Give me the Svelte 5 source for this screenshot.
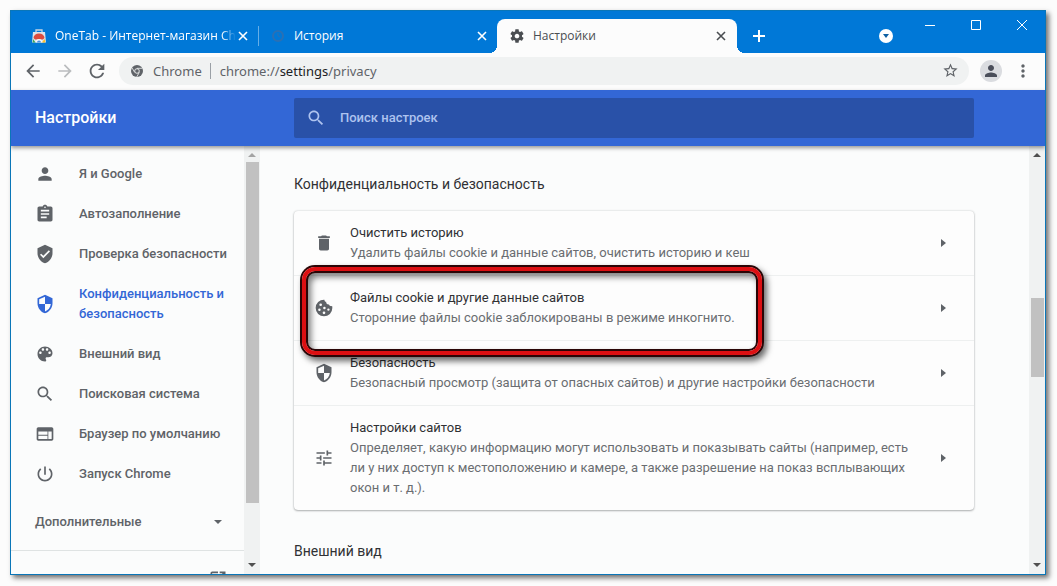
<script>
  let query = $state("");
  let address = $state("chrome://settings/privacy");
  let current = $state("privacy");

  const icons = {
    person:
      "M12 12c2.2 0 4-1.8 4-4s-1.8-4-4-4-4 1.8-4 4 1.8 4 4 4zm0 2c-2.7 0-8 1.3-8 4v2h16v-2c0-2.7-5.3-4-8-4z",
    clipboard:
      "M19 3h-4.2C14.4 1.8 13.3 1 12 1s-2.4.8-2.8 2H5c-1.1 0-2 .9-2 2v14c0 1.1.9 2 2 2h14c1.1 0 2-.9 2-2V5c0-1.1-.9-2-2-2zm-7 0c.55 0 1 .45 1 1s-.45 1-1 1-1-.45-1-1 .45-1 1-1zm2 14H7v-2h7v2zm3-4H7v-2h10v2zm0-4H7V7h10v2z",
    check:
      "M12 1L3 5v6c0 5.55 3.84 10.74 9 12 5.16-1.26 9-6.45 9-12V5l-9-4zm-2 16l-4-4 1.41-1.41L10 14.17l6.59-6.59L18 9l-8 8z",
    shield:
      "M12 1L3 5v6c0 5.55 3.84 10.74 9 12 5.16-1.26 9-6.45 9-12V5l-9-4zm0 10.99h7c-.53 4.12-3.28 7.79-7 8.94V12H5V6.3l7-3.11v8.8z",
    palette:
      "M12 3c-4.97 0-9 4.03-9 9s4.03 9 9 9c.83 0 1.5-.67 1.5-1.5 0-.39-.15-.74-.39-1.01-.23-.26-.38-.61-.38-.99 0-.83.67-1.5 1.5-1.5H16c2.76 0 5-2.24 5-5 0-4.42-4.03-8-9-8zm-5.5 9c-.83 0-1.5-.67-1.5-1.5S5.67 9 6.5 9 8 9.67 8 10.5 7.33 12 6.5 12zm3-4C8.67 8 8 7.33 8 6.5S8.67 5 9.5 5s1.5.67 1.5 1.5S10.33 8 9.5 8zm5 0c-.83 0-1.5-.67-1.5-1.5S13.67 5 14.5 5s1.5.67 1.5 1.5S15.33 8 14.5 8zm3 4c-.83 0-1.5-.67-1.5-1.5S16.67 9 17.5 9s1.5.67 1.5 1.5-.67 1.5-1.5 1.5z",
    search:
      "M15.5 14h-.79l-.28-.27C15.41 12.59 16 11.11 16 9.5 16 5.91 13.09 3 9.5 3S3 5.91 3 9.5 5.91 16 9.5 16c1.61 0 3.09-.59 4.23-1.57l.27.28v.79l5 4.99L20.49 19l-4.99-5zm-6 0C7.01 14 5 11.99 5 9.5S7.01 5 9.5 5 14 7.01 14 9.5 11.99 14 9.5 14z",
    browser:
      "M20 4H4c-1.1 0-2 .9-2 2v12c0 1.1.9 2 2 2h16c1.1 0 2-.9 2-2V6c0-1.1-.9-2-2-2zm-5 14H4v-4h11v4zm0-5H4V9h11v4zm5 5h-4V9h4v9z",
    power:
      "M13 3h-2v10h2V3zm4.83 2.17l-1.42 1.42C17.99 7.86 19 9.81 19 12c0 3.87-3.13 7-7 7s-7-3.13-7-7c0-2.19 1.01-4.14 2.58-5.42L6.17 5.17C4.23 6.82 3 9.26 3 12c0 4.97 4.03 9 9 9s9-4.03 9-9c0-2.74-1.23-5.18-3.17-6.83z",
    trash: "M6 19c0 1.1.9 2 2 2h8c1.1 0 2-.9 2-2V7H6v12zM19 4h-3.5l-1-1h-5l-1 1H5v2h14V4z",
    cookie:
      "M12 2a10 10 0 1 0 10 10c0-1-.1-1.6-.3-2.3-1.6.5-3.2-.3-3.7-1.9-2 .3-3.7-1.3-3.4-3.2-1.4-.3-2.1-1.3-2.1-2.6zM8 6.5a1.6 1.6 0 1 1 0 3.2 1.6 1.6 0 0 1 0-3.2zM6.5 12.5a1.5 1.5 0 1 1 0 3 1.5 1.5 0 0 1 0-3zM12.5 10.5a1.5 1.5 0 1 1 0 3 1.5 1.5 0 0 1 0-3zM17.3 12.5a1.4 1.4 0 1 1 0 2.8 1.4 1.4 0 0 1 0-2.8zM12 16.2a1.6 1.6 0 1 1 0 3.2 1.6 1.6 0 0 1 0-3.2z",
    tune: "M3 17v2h6v-2H3zM3 5v2h10V5H3zm10 16v-2h8v-2h-8v-2h-2v6h2zM7 9v2H3v2h4v2h2V9H7zm14 4v-2H11v2h10zm-6-4h2V7h4V5h-4V3h-2v6z",
    gear: "M19.43 12.98c.04-.32.07-.64.07-.98s-.03-.66-.07-.98l2.11-1.65c.19-.15.24-.42.12-.64l-2-3.46c-.12-.22-.39-.3-.61-.22l-2.49 1c-.52-.4-1.08-.73-1.69-.98l-.38-2.65C14.46 2.18 14.25 2 14 2h-4c-.25 0-.46.18-.49.42l-.38 2.65c-.61.25-1.17.59-1.69.98l-2.49-1c-.23-.09-.49 0-.61.22l-2 3.46c-.13.22-.07.49.12.64l2.11 1.65c-.04.32-.07.65-.07.98s.03.66.07.98l-2.11 1.65c-.19.15-.24.42-.12.64l2 3.46c.12.22.39.3.61.22l2.49-1c.52.4 1.08.73 1.69.98l.38 2.65c.03.24.24.42.49.42h4c.25 0 .46-.18.49-.42l.38-2.65c.61-.25 1.17-.59 1.69-.98l2.49 1c.23.09.49 0 .61-.22l2-3.46c.12-.22.07-.49-.12-.64l-2.11-1.65zM12 15.5c-1.93 0-3.5-1.57-3.5-3.5s1.57-3.5 3.5-3.5 3.5 1.57 3.5 3.5-1.57 3.5-3.5 3.5z",
    back: "M20 11H7.83l5.59-5.59L12 4l-8 8 8 8 1.41-1.41L7.83 13H20v-2z",
    forward: "M12 4l-1.41 1.41L16.17 11H4v2h12.17l-5.58 5.59L12 20l8-8z",
    reload:
      "M17.65 6.35C16.2 4.9 14.21 4 12 4c-4.42 0-7.99 3.58-7.99 8s3.57 8 7.99 8c3.73 0 6.84-2.55 7.73-6h-2.08c-.82 2.33-3.04 4-5.65 4-3.31 0-6-2.69-6-6s2.69-6 6-6c1.66 0 3.14.69 4.22 1.78L13 11h7V4l-2.35 2.35z",
    star: "M22 9.24l-7.19-.62L12 2 9.19 8.63 2 9.24l5.46 4.73L5.82 21 12 17.27 18.18 21l-1.63-7.03L22 9.24zM12 15.4l-3.76 2.27 1-4.28-3.32-2.88 4.38-.38L12 6.1l1.71 4.04 4.38.38-3.32 2.88 1 4.28L12 15.4z",
    dots: "M12 8c1.1 0 2-.9 2-2s-.9-2-2-2-2 .9-2 2 .9 2 2 2zm0 2c-1.1 0-2 .9-2 2s.9 2 2 2 2-.9 2-2-.9-2-2-2zm0 6c-1.1 0-2 .9-2 2s.9 2 2 2 2-.9 2-2-.9-2-2-2z",
    open: "M19 19H5V5h7V3H5c-1.1 0-2 .9-2 2v14c0 1.1.9 2 2 2h14c1.1 0 2-.9 2-2v-7h-2v7zM14 3v2h3.59l-9.83 9.83 1.41 1.41L19 6.41V10h2V3h-7z",
  };

  const menu = [
    { id: "people", icon: "person", label: "Я и Google" },
    { id: "autofill", icon: "clipboard", label: "Автозаполнение" },
    { id: "safetyCheck", icon: "check", label: "Проверка безопасности" },
    { id: "privacy", icon: "shield", label: "Конфиденциальность и безопасность" },
    { id: "appearance", icon: "palette", label: "Внешний вид" },
    { id: "search", icon: "search", label: "Поисковая система" },
    { id: "defaultBrowser", icon: "browser", label: "Браузер по умолчанию" },
    { id: "onStartup", icon: "power", label: "Запуск Chrome" },
  ];

  const rows = [
    {
      icon: "trash",
      title: "Очистить историю",
      text: "Удалить файлы cookie и данные сайтов, очистить историю и кеш",
    },
    {
      icon: "cookie",
      title: "Файлы cookie и другие данные сайтов",
      text: "Сторонние файлы cookie заблокированы в режиме инкогнито.",
      marked: true,
    },
    {
      icon: "shield",
      title: "Безопасность",
      text: "Безопасный просмотр (защита от опасных сайтов) и другие настройки безопасности",
    },
    {
      icon: "tune",
      title: "Настройки сайтов",
      text: "Определяет, какую информацию могут использовать и показывать сайты (например, есть ли у них доступ к местоположению и камере, а также разрешение на показ всплывающих окон и т. д.).",
    },
  ];
</script>

{#snippet icon(name, size)}
  <svg width={size} height={size} viewBox="0 0 24 24" fill="currentColor" fill-rule="evenodd" aria-hidden="true">
    <path d={icons[name]} />
  </svg>
{/snippet}

{#snippet cross()}
  <svg width="10" height="10" viewBox="0 0 10 10" stroke="currentColor" stroke-width="1.6" aria-hidden="true">
    <path d="M1 1l8 8M9 1l-8 8" />
  </svg>
{/snippet}

{#snippet scrollbar(kind)}
  <div class="scrollbar {kind}" aria-hidden="true">
    <svg class="arrow up" width="8" height="4" viewBox="0 0 8 4"><path d="M0 4l4-4 4 4z" /></svg>
    <div class="track"><div class="thumb"></div></div>
    <svg class="arrow" width="8" height="4" viewBox="0 0 8 4"><path d="M0 0l4 4 4-4z" /></svg>
  </div>
{/snippet}

<div class="desktop">
  <div class="window">
    <div class="tab-strip">
      <div class="tab">
        <svg width="16" height="16" viewBox="0 0 16 16" aria-hidden="true">
          <path d="M5 4V2h6v2" fill="none" stroke="#c3d4e4" stroke-width="1.3" />
          <path d="M2 4h12l1 10.5H1z" fill="#dfe4ea" />
          <path d="M2.5 10a5.5 4.5 0 0 1 11 0l-1.5 1.5H4z" fill="#dd4b3e" />
          <path d="M2 11l2.5 3.5H1.7z" fill="#3aa757" />
          <path d="M14 11l-4 3.5h4.3z" fill="#fbc02d" />
          <path d="M4.5 14.5a3.5 3.5 0 0 1 7 0z" fill="#f3f5f7" />
          <path d="M6 14.5a2 2 0 0 1 4 0z" fill="#4a90e2" />
        </svg>
        <span class="tab-title fade">OneTab - Интернет-магазин Chr</span>
        <button aria-label="Закрыть">{@render cross()}</button>
      </div>
      <div class="tab second">
        <svg width="16" height="16" viewBox="0 0 16 16" fill="none" stroke="#2a70b4" stroke-width="2" aria-hidden="true">
          <circle cx="8" cy="8" r="5" />
          <path d="M8 5v3l2 1" stroke-width="1" />
        </svg>
        <span class="tab-title">История</span>
        <button aria-label="Закрыть">{@render cross()}</button>
      </div>
      <div class="tab active">
        {@render icon("gear", 16)}
        <span class="tab-title">Настройки</span>
        <button aria-label="Закрыть">{@render cross()}</button>
      </div>
      <button class="new-tab" aria-label="Новая вкладка">
        <svg width="12" height="12" viewBox="0 0 12 12" stroke="currentColor" stroke-width="2" aria-hidden="true">
          <path d="M6 0v12M0 6h12" />
        </svg>
      </button>
      <button class="tab-search" aria-label="Поиск вкладок">
        <svg width="14" height="14" viewBox="0 0 14 14" aria-hidden="true">
          <circle cx="7" cy="7" r="7" fill="#fff" />
          <path d="M4 5h6L7 9z" fill="#0d5fa3" />
        </svg>
      </button>
      <div class="window-controls">
        <button aria-label="Свернуть">
          <svg width="10" height="10" viewBox="0 0 10 10" stroke="currentColor"><path d="M0 5.5h10" /></svg>
        </button>
        <button aria-label="Развернуть">
          <svg width="10" height="10" viewBox="0 0 10 10" stroke="currentColor" fill="none"><path d="M.5.5h9v9h-9z" /></svg>
        </button>
        <button aria-label="Закрыть окно">
          <svg width="10" height="10" viewBox="0 0 10 10" stroke="currentColor"><path d="M0 0l10 10M10 0L0 10" /></svg>
        </button>
      </div>
    </div>

    <div class="toolbar">
      <button aria-label="Назад">{@render icon("back", 20)}</button>
      <button class="dim" aria-label="Вперёд">{@render icon("forward", 20)}</button>
      <button aria-label="Обновить">{@render icon("reload", 22)}</button>
      <div class="omnibox">
        <svg width="12" height="12" viewBox="0 0 12 12" aria-hidden="true">
          <circle cx="6" cy="6" r="6" fill="#5f6368" />
          <circle cx="6" cy="6" r="2.3" fill="#5f6368" stroke="#f0f2f2" stroke-width=".9" />
          <path d="M6 3.3h5.4M3.7 7.4L1 2.8M8.3 7.4L5.7 12" stroke="#f0f2f2" stroke-width=".8" />
        </svg>
        <span class="scheme">Chrome</span>
        <span class="address" aria-label={address}>chrome://<b>settings</b>/privacy</span>
        <button aria-label="Добавить в закладки">{@render icon("star", 17)}</button>
      </div>
      <button class="avatar" aria-label="Профиль">{@render icon("person", 18)}</button>
      <button aria-label="Меню">{@render icon("dots", 20)}</button>
    </div>

    <header>
      <h1>Настройки</h1>
      <label class="search">
        {@render icon("search", 20)}
        <input type="text" placeholder="Поиск настроек" aria-label="Поиск настроек" bind:value={query} />
      </label>
    </header>

    <div class="body">
      <div class="sidebar">
        <nav>
          {#each menu as item}
            <a
              href="#{item.id}"
              class:selected={current === item.id}
              onclick={() => (current = item.id)}
            >
              {@render icon(item.icon, 20)}
              <span>{item.label}</span>
            </a>
          {/each}
          <button class="advanced">
            <span>Дополнительные</span>
            <svg width="8" height="4" viewBox="0 0 8 4" fill="currentColor"><path d="M0 0h8L4 4z" /></svg>
          </button>
          <a class="extensions" href="#extensions" aria-label="Расширения">
            {@render icon("open", 20)}
          </a>
        </nav>
        {@render scrollbar("side")}
      </div>

      <main>
        <section>
          <h2>Конфиденциальность и безопасность</h2>
          <div class="card">
            {#each rows as row}
              <button class="row">
                {@render icon(row.icon, 20)}
                <span class="row-text">
                  <span class="row-title">{row.title}</span>
                  <span class="row-sub">{row.text}</span>
                </span>
                <svg width="5" height="8" viewBox="0 0 5 8" fill="currentColor"><path d="M0 0v8l5-4z" /></svg>
                {#if row.marked}
                  <span class="marker"></span>
                {/if}
              </button>
            {/each}
          </div>
        </section>
        <section>
          <h2>Внешний вид</h2>
        </section>
      </main>
      {@render scrollbar("page")}
    </div>
  </div>
</div>

<style>
  :global(body) {
    background: #fcfcfc;
  }

  .desktop {
    box-sizing: border-box;
    height: 100vh;
    padding: 10px 11px 11px 10px;
    font-family: Roboto, "Noto Sans", sans-serif;
    font-size: 13px;
    line-height: 20px;
    color: #5f6368;
  }

  .window {
    box-sizing: border-box;
    height: 100%;
    display: flex;
    flex-direction: column;
    border: 1px solid #0a76b8;
    background: #fbfcfc;
    box-shadow: 3px 3px 5px rgba(0, 0, 0, 0.55);
    overflow: hidden;
  }

  button {
    display: flex;
    align-items: center;
    justify-content: center;
    padding: 0;
    border: none;
    background: none;
    color: inherit;
    font: inherit;
    text-align: left;
    cursor: pointer;
  }

  svg {
    flex: none;
  }

  .tab-strip {
    flex: none;
    display: flex;
    align-items: flex-end;
    height: 42px;
    padding-left: 8px;
    background: #0078d7;
    color: #fff;
    font-family: "Open Sans", "Noto Sans", sans-serif;
    font-size: 12px;
  }

  .tab {
    box-sizing: border-box;
    position: relative;
    flex: 0 1 239px;
    min-width: 0;
    display: flex;
    align-items: center;
    gap: 8px;
    height: 34px;
    padding: 0 10px 0 12px;
  }

  .second::before {
    content: "";
    position: absolute;
    left: 0;
    top: 7px;
    width: 1px;
    height: 20px;
    background: #66aee7;
  }

  .active {
    flex-basis: 240px;
    padding-right: 11px;
    border-radius: 8px 8px 0 0;
    background: #fcfcfc;
    color: #4a4d51;
  }

  .active::before,
  .active::after {
    content: "";
    position: absolute;
    bottom: 0;
    width: 8px;
    height: 8px;
  }

  .active::before {
    right: 100%;
    background: radial-gradient(circle at 0 0, transparent 8px, #fcfcfc 8px);
  }

  .active::after {
    left: 100%;
    background: radial-gradient(circle at 100% 0, transparent 8px, #fcfcfc 8px);
  }

  .tab-title {
    flex: 1;
    overflow: hidden;
    white-space: nowrap;
  }

  .fade {
    margin-right: -6px;
    mask-image: linear-gradient(to right, #000 92%, transparent);
  }

  .new-tab {
    height: 34px;
    width: 44px;
  }

  .tab-search {
    height: 34px;
    width: 42px;
    margin-left: auto;
  }

  .window-controls {
    align-self: flex-start;
    display: flex;
  }

  .window-controls button {
    width: 46px;
    height: 28px;
  }

  .toolbar {
    flex: none;
    box-sizing: border-box;
    display: flex;
    align-items: center;
    height: 37px;
    padding: 0 6px 2px;
    background: #fcfcfc;
  }

  .toolbar > button {
    width: 32px;
    height: 32px;
  }

  .toolbar > .dim {
    color: #babcbe;
  }

  .omnibox {
    flex: 1;
    display: flex;
    align-items: center;
    height: 28px;
    margin: 0 11px 0 6px;
    padding: 0 10px 0 12px;
    border-radius: 14px;
    background: #f0f2f2;
    font-family: "Noto Sans", "Open Sans", sans-serif;
  }

  .scheme {
    margin: 0 8px 0 10px;
  }

  .address {
    flex: 1;
    border-left: 1px solid #9aa0a6;
    padding-left: 9px;
    line-height: 16px;
  }

  .address b {
    font-weight: 400;
    color: #202124;
  }

  .toolbar > .avatar {
    width: 22px;
    height: 22px;
    margin-right: 5px;
    border-radius: 50%;
    background: #dadce0;
    color: #4a4e5a;
  }

  header {
    flex: none;
    z-index: 2;
    display: flex;
    align-items: center;
    height: 56px;
    padding: 0 71px 0 24px;
    background: #3367d6;
    box-shadow: 0 2px 4px rgba(0, 0, 0, 0.4);
    color: #fff;
  }

  h1 {
    flex: none;
    width: 259px;
    margin: 0;
    font-size: 16px;
    line-height: 24px;
    font-weight: 500;
  }

  .search {
    flex: 1;
    display: flex;
    align-items: center;
    gap: 14px;
    height: 40px;
    padding: 0 12px;
    border-radius: 2px;
    background: #2951a8;
    color: #aec3ef;
  }

  .search input {
    flex: 1;
    min-width: 0;
    padding: 0;
    border: none;
    outline: none;
    background: none;
    color: #fff;
    font: inherit;
    font-weight: 500;
  }

  .search input::placeholder {
    color: #aec3ef;
    opacity: 1;
  }

  .body {
    flex: 1;
    min-height: 0;
    display: flex;
  }

  .sidebar {
    flex: none;
    display: flex;
    width: 249px;
    overflow: hidden;
    font-weight: 500;
  }

  nav {
    flex: 1;
    padding-top: 8px;
  }

  nav a {
    display: flex;
    align-items: center;
    gap: 24px;
    padding: 10px 12px 10px 24px;
    color: inherit;
    text-decoration: none;
  }

  nav a.selected {
    color: #3367d6;
  }

  .advanced {
    box-sizing: border-box;
    justify-content: space-between;
    width: 100%;
    height: 56px;
    padding: 0 22px 0 24px;
  }

  nav .extensions {
    justify-content: flex-end;
    padding: 18px 16px 0;
    border-top: 1px solid #dfe3e3;
  }

  .scrollbar {
    box-sizing: border-box;
    flex: none;
    display: flex;
    flex-direction: column;
    align-items: center;
    width: 16px;
    padding: 7px 0;
    background: #f0f2f2;
  }

  .arrow {
    fill: #505050;
  }

  .side .up {
    fill: #a3a3a3;
  }

  .track {
    flex: 1;
    display: flex;
    flex-direction: column;
    width: 13px;
    margin: 5px 0;
  }

  .thumb {
    background: #c1c1c1;
  }

  .side .thumb {
    height: 86%;
  }

  .page .thumb {
    height: 20%;
    margin-top: 136px;
  }

  main {
    flex: 1;
    min-width: 0;
    overflow: hidden;
    padding: 0 55px 0 34px;
  }

  section {
    padding-top: 28px;
    margin-bottom: 3px;
  }

  h2 {
    margin: 0 0 17px;
    font-size: 14px;
    font-weight: 400;
    color: #303134;
  }

  .card {
    border-radius: 4px;
    background: #fdfdfd;
    box-shadow:
      0 1px 2px rgba(60, 64, 67, 0.35),
      0 0 2px rgba(60, 64, 67, 0.25);
  }

  .row {
    position: relative;
    width: 100%;
    padding: 12px 28px 12px 20px;
    border-top: 1px solid #eef0f0;
  }

  .row:first-child {
    border-top: none;
  }

  .row-text {
    flex: 1;
    display: flex;
    flex-direction: column;
    margin: 0 31px 0 16px;
  }

  .row-title {
    color: #303134;
  }

  .row-sub {
    color: #6a6d71;
  }

  .marker {
    position: absolute;
    z-index: 1;
    box-sizing: border-box;
    top: -9px;
    left: 8px;
    width: 460px;
    height: 88px;
    border: 4px solid #dc0f12;
    border-radius: 13px;
    box-shadow:
      0 0 0 2px #2a0506,
      3px 4px 6px 2px rgba(0, 0, 0, 0.6),
      inset 0 0 0 2px #2a0506,
      inset 3px 4px 6px 2px rgba(0, 0, 0, 0.5);
    pointer-events: none;
  }
</style>
